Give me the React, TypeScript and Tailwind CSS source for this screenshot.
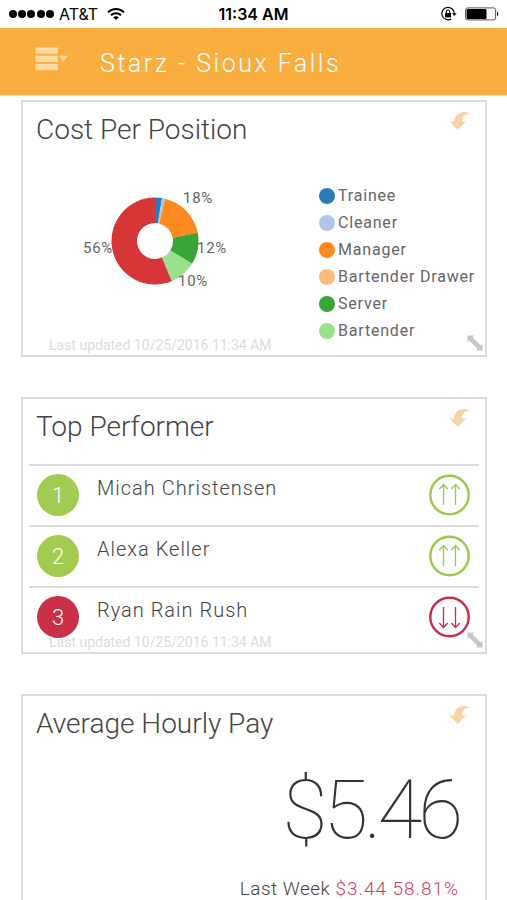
import type { ReactNode } from "react";

const POSITIONS = [
  { label: "Trainee", color: "#2c7bb6", share: 2.6 },
  { label: "Cleaner", color: "#b0c6e8", share: 1.1 },
  { label: "Manager", color: "#fd8a1f", share: 18.3 },
  { label: "Bartender Drawer", color: "#fdbb7d", share: 0 },
  { label: "Server", color: "#37a537", share: 11.8 },
  { label: "Bartender", color: "#9be08c", share: 9.9 },
];

const OTHER = { label: "Other", color: "#d63638", share: 56.3 };

const CHART_LABELS = [
  { text: "18%", x: 103, y: 23 },
  { text: "12%", x: 117, y: 73 },
  { text: "56%", x: 3, y: 73 },
  { text: "10%", x: 98, y: 106 },
];

const PERFORMERS = [
  { rank: 1, name: "Micah Christensen", up: true },
  { rank: 2, name: "Alexa Keller", up: true },
  { rank: 3, name: "Ryan Rain Rush", up: false },
];

function slicePath(start: number, end: number) {
  const cx = 75, cy = 61, outer = 43.5, inner = 18;
  const point = (r: number, pct: number) => {
    const a = (pct / 100) * Math.PI * 2;
    return `${(cx + r * Math.sin(a)).toFixed(2)} ${(cy - r * Math.cos(a)).toFixed(2)}`;
  };
  const large = end - start > 50 ? 1 : 0;
  return `M${point(outer, start)}A${outer} ${outer} 0 ${large} 1 ${point(outer, end)}L${point(inner, end)}A${inner} ${inner} 0 ${large} 0 ${point(inner, start)}Z`;
}

function DonutChart() {
  let total = 0;
  const slices = [...POSITIONS, OTHER].filter((p) => p.share > 0).map((p) => {
    const start = total;
    total += p.share;
    return { ...p, d: slicePath(start, total) };
  });

  return (
    <svg width="160" height="120" viewBox="0 0 160 120" className="shrink-0 overflow-visible" role="img" aria-label="Cost per position">
      {slices.map((s) => <path key={s.label} d={s.d} fill={s.color} />)}
      {CHART_LABELS.map((l) => (
        <text key={l.text} x={l.x} y={l.y} className="fill-[#666] text-[15px] tracking-wider">{l.text}</text>
      ))}
    </svg>
  );
}

function StatusBar() {
  return (
    <div className="grid grid-cols-3 items-center h-7 px-2 font-[Inter,sans-serif] text-[16px] text-black">
      <div className="flex items-center gap-1">
        <svg width="47" height="10" viewBox="0 0 47 10" aria-hidden="true">
          {[5, 14, 23, 33, 42].map((x) => <circle key={x} cx={x} cy="5" r="4" />)}
        </svg>
        <span>AT&amp;T</span>
        <svg width="20" height="14" viewBox="0 0 20 14" fill="none" stroke="currentColor" strokeWidth="2" className="ml-1" aria-hidden="true">
          <path d="M2 5.2C6.5 0.8 13.5 0.8 18 5.2" />
          <path d="M5 8.2C7.8 5.5 12.2 5.5 15 8.2" />
          <path d="M10 13L7.2 10.2C8.8 8.8 11.2 8.8 12.8 10.2Z" fill="currentColor" stroke="none" />
        </svg>
      </div>
      <span className="text-center font-semibold">11:34 AM</span>
      <div className="flex items-center justify-end gap-2">
        <svg width="17" height="16" viewBox="0 0 17 16" fill="none" stroke="currentColor" aria-hidden="true">
          <path d="M11.2 12.9A6.2 6.2 0 1 1 14.2 8" strokeWidth="1.2" />
          <path d="M12 7.2H16.6L14.3 10Z" fill="currentColor" stroke="none" />
          <rect x="5" y="7" width="6" height="4.4" fill="currentColor" stroke="none" />
          <path d="M6.3 7V5.7A1.7 1.7 0 0 1 9.7 5.7V7" strokeWidth="1.1" />
        </svg>
        <svg width="34" height="14" viewBox="0 0 34 14" aria-hidden="true">
          <rect x="0.6" y="0.9" width="30" height="12" rx="2" fill="none" stroke="#555" />
          <rect x="1.6" y="1.9" width="19.9" height="10" rx="1" />
          <path d="M32 4.6C33.8 5.4 33.8 8.4 32 9.2Z" />
        </svg>
      </div>
    </div>
  );
}

function Card({ title, updated, children }: { title: string; updated?: string; children: ReactNode }) {
  return (
    <section className="relative min-h-[257px] border-2 border-[#dcdcde] bg-white pb-2">
      <div className="flex items-start justify-between pl-[13px] pr-[15px] pt-2">
        <h2 className="text-[28px] leading-10 font-light text-[#444]">{title}</h2>
        <button type="button" aria-label={`Refresh ${title}`} className="mt-px">
          <svg width="20" height="20" viewBox="0 0 20 20" fill="#f8d3a6">
            <path d="M20 2.4C15.2 2.6 12.2 5.4 11.8 10.6H16L7.8 19L-0.4 10.6H4C4.6 2.6 11.4 -1.4 20 2.4Z" />
          </svg>
        </button>
      </div>
      {children}
      {updated && (
        <>
          <p className="absolute bottom-0 left-[26px] text-[14px] leading-5 text-[#dcdcdc]">Last updated {updated}</p>
          <svg width="16" height="16" viewBox="0 0 16 16" fill="#c6c6c6" className="absolute bottom-1 right-0.5" aria-hidden="true">
            <path d="M0.5 0.5H7L5.6 2.2L13.8 10.4L15.5 9V15.5H9L10.4 13.8L2.2 5.6L0.5 7Z" />
          </svg>
        </>
      )}
    </section>
  );
}

function TrendIcon({ up }: { up: boolean }) {
  return (
    <svg width="42" height="42" viewBox="0 0 42 42" fill="none" stroke={up ? "#9cc84b" : "#c62e4b"} role="img" aria-label={up ? "Up" : "Down"}>
      <circle cx="20.5" cy="21" r="19.2" strokeWidth="2.4" />
      <g strokeWidth="1.3" transform={up ? undefined : "rotate(180 20.5 21)"}>
        <path d="M14.5 31V10.5M10.3 15L14.5 10.5L18.7 15" />
        <path d="M26.5 31V10.5M22.3 15L26.5 10.5L30.7 15" />
      </g>
    </svg>
  );
}

export default function App() {
  return (
    <div className="flex flex-col h-screen overflow-hidden bg-white font-[Roboto,sans-serif]">
      <StatusBar />

      <header className="flex shrink-0 items-center gap-8 h-[68px] border-b border-[#fde3a8] bg-[#fbae40] pl-[35px] pt-1">
        <button type="button" aria-label="Menu" className="-mt-2.5">
          <svg width="33" height="24" viewBox="0 0 33 24" fill="#fdd9a3">
            <rect x="0.5" y="0.5" width="22.5" height="6.3" />
            <rect x="0.5" y="8.7" width="22.5" height="6.3" />
            <rect x="0.5" y="16.9" width="22.5" height="6.3" />
            <path d="M24 8.8H33L28.5 14.8Z" />
          </svg>
        </button>
        <h1 className="text-[25px] font-light tracking-widest text-white">Starz - Sioux Falls</h1>
      </header>

      <main className="flex flex-1 flex-col gap-10 overflow-y-auto [scrollbar-width:none] pl-[21px] pr-5 pt-1">
        <Card title="Cost Per Position" updated="10/25/2016 11:34 AM">
          <div className="flex items-start justify-between pl-[57px] pr-2.5 pt-[30px]">
            <DonutChart />
            <ul className="pt-0.5">
              {POSITIONS.map((p) => (
                <li key={p.label} className="flex items-center gap-[3px] h-[27px] text-[16px] tracking-wider whitespace-nowrap text-[#666]">
                  <span className="size-4 rounded-full" style={{ backgroundColor: p.color }} />
                  {p.label}
                </li>
              ))}
            </ul>
          </div>
        </Card>

        <Card title="Top Performer" updated="10/25/2016 11:34 AM">
          <ol className="mx-1.5 mt-[17px]">
            {PERFORMERS.map((p) => (
              <li key={p.rank} className="flex items-start h-[61px] border-t-2 border-[#dcdcdc] px-2 pt-2">
                <span className={`flex items-center justify-center size-[42px] rounded-full text-[22px] font-light text-white ${p.up ? "bg-[#a2cc51]" : "bg-[#c93048]"}`}>
                  {p.rank}
                </span>
                <span className="flex-1 pl-[18px] text-[20px] leading-7 font-light tracking-wider text-[#444]">{p.name}</span>
                <TrendIcon up={p.up} />
              </li>
            ))}
          </ol>
        </Card>

        <Card title="Average Hourly Pay">
          <div className="flex flex-col items-end pr-[26px] pt-4">
            <p className="text-[82px] leading-[100px] font-thin tracking-tighter text-[#333]">$5.46</p>
            <p className="mt-[15px] text-[19px] leading-7 font-light tracking-wide text-[#444]">
              Last Week <span className="tracking-wider text-[#cc3d62]">$3.44 58.81%</span>
            </p>
          </div>
        </Card>
      </main>
    </div>
  );
}
